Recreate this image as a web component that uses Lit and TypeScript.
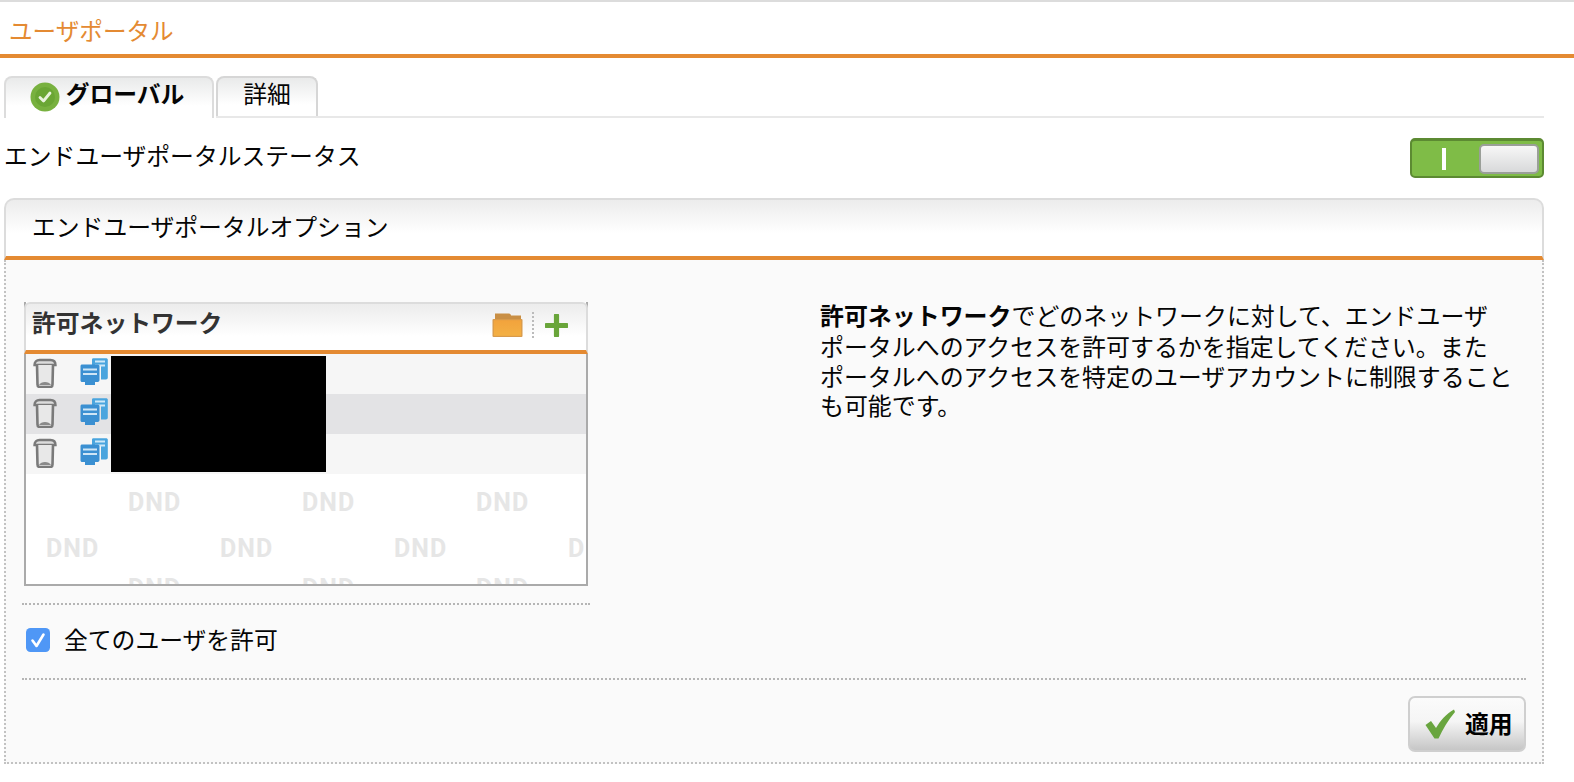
import { LitElement, html, css, svg } from "lit";
import { customElement } from "lit/decorators.js";

const trash = svg`<svg class="trash" width="24" height="30" viewBox="0 0 24 30" fill="none">
  <path d="M1.5 7 C1.5 4 3.5 2 6.5 2 H17.5 C20.5 2 22.5 4 22.5 7 Z" fill="#dcdcdc" stroke="#7a7a7a" stroke-width="2.4"/>
  <path d="M4 7 L4.5 26.5 C4.5 28 5.5 29 7 29 H17 C18.5 29 19.5 28 19.5 26.5 L20 7" fill="#e8e8e8" stroke="#7a7a7a" stroke-width="2.6"/>
  <path d="M6 27 C8 23 16 23 18 27 Z" fill="#8a8a8a"/>
</svg>`;

const server = svg`<svg class="server" width="28" height="28" viewBox="0 0 28 28">
  <path d="M12 1.5 C12 0.8 12.8 0.3 13.5 0.3 H26 C27 0.3 27.8 0.8 27.8 1.8 V19.5 C27.8 20.5 27 21.5 26 21.5 H21 V8 H12 Z" fill="#4aa5de"/>
  <path d="M15 3.5 H25 M15 7.5 H25" stroke="#cfe9f8" stroke-width="1.8"/>
  <path d="M0.5 8.5 C0.5 7 1 6.5 2.5 6.5 H17 C18.5 6.5 19.5 7 19.5 8.5 V22 C19.5 23.5 18.5 24 17 24 H15 V27 H5 V24 H2.5 C1 24 0.5 23.5 0.5 22 Z" fill="#3b90d2"/>
  <path d="M3 11.5 H17 M3 16 H17" stroke="#cfe6f6" stroke-width="1.9"/>
</svg>`;

const folder = svg`<svg class="soft" width="31" height="24" viewBox="0 0 31 24">
  <path d="M3 0.5 H17 C18 0.5 19 1.5 19 2.5 H29 V6 H3 Z" fill="#c98f45"/>
  <rect x="0.5" y="6" width="30" height="18" rx="1" fill="#d89a4a"/>
  <rect x="1.8" y="7.2" width="27.4" height="15.6" fill="url(#fg)"/>
  <defs><linearGradient id="fg" x1="0" y1="0" x2="0" y2="1"><stop offset="0" stop-color="#f2a33c"/><stop offset="1" stop-color="#f3b044"/></linearGradient></defs>
</svg>`;

const plus = svg`<svg class="soft" width="23" height="23" viewBox="0 0 23 23">
  <path d="M11.5 1.5 V21.5 M1.5 11.5 H21.5" stroke="#69a53a" stroke-width="5.2" stroke-linecap="round"/>
</svg>`;

const okCircle = svg`<svg class="soft" width="30" height="30" viewBox="0 0 30 30">
  <circle cx="15" cy="15" r="14.5" fill="#78b13f"/>
  <circle cx="15" cy="15" r="10" fill="#6aa634"/>
  <path d="M10 15.5 L13.5 19 L20 11" fill="none" stroke="#e9f3dd" stroke-width="2.8" stroke-linecap="round" stroke-linejoin="round"/>
</svg>`;

const applyCheck = svg`<svg class="soft" width="30" height="30" viewBox="0 0 30 30">
  <path d="M0.5 16 L6 12 L11 19 C15 12 21 5 29 0.5 L30 3 C23 11 18 20 13.5 29.5 L9.5 29.5 Z" fill="#69a53f"/>
</svg>`;

const tick = svg`<svg width="24" height="24" viewBox="0 0 24 24">
  <rect x="0" y="0" width="24" height="24" rx="4.5" fill="#4f97f6"/>
  <path d="M6.5 12.5 L10.5 18 L17.5 6.5" fill="none" stroke="#fff" stroke-width="2.6" stroke-linecap="round" stroke-linejoin="round"/>
</svg>`;

@customElement("app-root")
export class AppRoot extends LitElement {
  static styles = css`
    :host {
      display: block;
      width: 1574px;
      height: 782px;
      overflow: hidden;
      background: #fff;
      color: #050505;
      font-family: "Noto Sans CJK JP", "Liberation Sans", sans-serif;
      font-size: 23.8px;
      line-height: 30px;
    }
    .soft { filter: blur(0.4px); flex: none; }
    .title {
      box-sizing: border-box;
      height: 58px;
      border-top: 2px solid #dcdcdc;
      border-bottom: 4px solid #e48a32;
      padding: 13px 0 0 9px;
      color: #e48a32;
      font-size: 23.6px;
    }
    .content {
      display: flex;
      flex-direction: column;
      margin: 0 30px 0 4px;
    }
    .tabs {
      display: flex;
      height: 42px;
      margin-top: 18px;
      gap: 2px;
      box-sizing: border-box;
    }
    .tab {
      box-sizing: border-box;
      height: 40px;
      display: flex;
      align-items: center;
      justify-content: center;
      border: 2px solid #d6d6d6;
      border-bottom: none;
      border-radius: 8px 8px 0 0;
      background: linear-gradient(#e9eaea, #fff 70%);
    }
    .tab span { margin-bottom: 8px; }
    .tab.active {
      width: 210px;
      height: 42px;
      padding-bottom: 2px;
      gap: 6px;
      font-weight: 700;
      padding-right: 4px;
      border-color: #dcdcdc;
    }
    .tab.other { width: 102px; box-shadow: 0 2px 0 #e8e8e8; }
    .tab-rest {
      flex: 1;
      height: 40px;
      border-bottom: 2px solid #e8e8e8;
      margin-left: -2px;
    }
    .status {
      display: flex;
      justify-content: space-between;
      align-items: center;
      height: 40px;
      margin-top: 20px;
    }
    .status span { margin-bottom: 6px; }
    .toggle {
      box-sizing: border-box;
      width: 134px;
      height: 40px;
      border-radius: 5px;
      background: #7fbc47;
      border: 2px solid #5c8a32;
      border-top-width: 3px;
      display: flex;
      align-items: center;
      justify-content: flex-end;
      padding-right: 3px;
    }
    .toggle .mark {
      width: 4px;
      height: 22px;
      background: #fff;
      margin-right: 33px;
    }
    .toggle .knob {
      box-sizing: border-box;
      width: 60px;
      height: 30px;
      border: 2px solid #9a9f98;
      border-radius: 5px;
      background: linear-gradient(#f7f7f7, #d8d9da);
    }
    .panel { margin-top: 20px; }
    .panel-head {
      box-sizing: border-box;
      height: 62px;
      border: 2px solid #dcdcdc;
      border-bottom: 4px solid #e48a32;
      border-radius: 10px 10px 0 0;
      background: linear-gradient(#ececec, #fff 60%);
      padding: 11px 0 0 26px;
    }
    .panel-body {
      box-sizing: border-box;
      height: 504px;
      background: #fafafa;
      border: 2px dotted #c2c2c2;
      border-top: none;
      padding: 0 16px 0 16px;
      display: flex;
      flex-direction: column;
    }
    .top {
      display: flex;
      height: 418px;
      flex: none;
    }
    .left {
      width: 568px;
      flex: none;
      padding-top: 42px;
    }
    .box {
      box-sizing: border-box;
      width: 564px;
      margin-left: 2px;
      height: 284px;
      border: 2px solid #aaa;
      border-top: none;
      background: #fff;
      display: flex;
      flex-direction: column;
    }
    .box-head {
      box-sizing: border-box;
      height: 52px;
      flex: none;
      margin: 0 -2px;
      border: 2px solid #dcdcdc;
      border-bottom: 4px solid #e48a32;
      border-radius: 6px 6px 0 0;
      background: linear-gradient(#ececec, #fff 70%);
      display: flex;
      align-items: flex-start;
      padding: 4px 18px 0 6px;
      color: #333;
      font-weight: 700;
    }
    .box-head .name { flex: 1; margin-top: -1px; }
    .tools { display: flex; align-items: center; margin-top: 4px; }
    .tools .sep-v {
      height: 26px;
      border-left: 2px dotted #bbb;
      margin: 0 11px 0 9px;
    }
    .rows {
      position: relative;
      flex: none;
    }
    .row {
      box-sizing: border-box;
      height: 40px;
      background: #f6f6f6;
      display: flex;
      align-items: flex-start;
      padding: 4px 0 0 7px;
      gap: 23px;
    }
    .row svg { filter: blur(0.6px); flex: none; }
    .row.alt { background: #e3e3e5; }
    .redact {
      position: absolute;
      left: 85px;
      top: 2px;
      width: 215px;
      height: 116px;
      background: #000;
    }
    .dnd {
      flex: 1;
      overflow: hidden;
      min-height: 0;
      font-family: "Roboto", "Liberation Sans", sans-serif;
      font-weight: 700;
      font-size: 25px;
      line-height: 46px;
      color: #e6e6e6;
      letter-spacing: 1px;
      padding-top: 6px;
    }
    .dnd-row {
      display: flex;
      white-space: nowrap;
      height: 46px;
    }
    .dnd-row span { flex: none; width: 174px; }
    .dnd-row.a { padding-left: 102px; }
    .dnd-row.b { padding-left: 20px; height: 40px; }
    .left-sep {
      border-top: 2px dotted #b5b5b5;
      margin-top: 17px;
      width: 568px;
    }
    .check {
      display: flex;
      align-items: center;
      gap: 14px;
      margin: 19px 0 0 4px;
    }
    .check svg { flex: none; }
    .check span { margin-bottom: 2px; }
    .help {
      margin-left: 230px;
      padding-top: 38px;
      width: 720px;
      white-space: nowrap;
      font-size: 23.95px;
    }
    .help b { font-weight: 700; }
    .help .l { display: block; line-height: 29.5px; }
    .help .l.first { line-height: 33px; }
    .rule {
      border-top: 2px dotted #b5b5b5;
      flex: none;
    }
    .foot {
      display: flex;
      justify-content: flex-end;
      padding-top: 16px;
    }
    .apply {
      box-sizing: border-box;
      width: 118px;
      height: 56px;
      border: 2px solid #cfcfcf;
      border-radius: 7px;
      background: linear-gradient(#fbfbfb 0%, #f5f5f5 45%, #c6c6c6 100%);
      display: flex;
      align-items: center;
      gap: 10px;
      padding-left: 15px;
      font-weight: 700;
      color: #000;
      font-family: inherit;
      font-size: inherit;
    }
    .apply span { margin-bottom: 3px; }
  `;

  render() {
    return html`
      <div class="title">ユーザポータル</div>
      <div class="content">
        <div class="tabs">
          <div class="tab active">${okCircle}<span>グローバル</span></div>
          <div class="tab other"><span>詳細</span></div>
          <div class="tab-rest"></div>
        </div>
        <div class="status">
          <span>エンドユーザポータルステータス</span>
          <div class="toggle"><div class="mark"></div><div class="knob"></div></div>
        </div>
        <div class="panel">
          <div class="panel-head">エンドユーザポータルオプション</div>
          <div class="panel-body">
            <div class="top">
              <div class="left">
                <div class="box">
                  <div class="box-head">
                    <span class="name">許可ネットワーク</span>
                    <div class="tools">${folder}<div class="sep-v"></div>${plus}</div>
                  </div>
                  <div class="rows">
                    <div class="row">${trash}${server}</div>
                    <div class="row alt">${trash}${server}</div>
                    <div class="row">${trash}${server}</div>
                    <div class="redact"></div>
                  </div>
                  <div class="dnd">
                    <div class="dnd-row a"><span>DND</span><span>DND</span><span>DND</span></div>
                    <div class="dnd-row b"><span>DND</span><span>DND</span><span>DND</span><span>DND</span></div>
                    <div class="dnd-row a"><span>DND</span><span>DND</span><span>DND</span></div>
                  </div>
                </div>
                <div class="left-sep"></div>
                <div class="check">${tick}<span>全てのユーザを許可</span></div>
              </div>
              <div class="help">
                <span class="l first"><b>許可ネットワーク</b>でどのネットワークに対して、エンドユーザ</span>
                <span class="l">ポータルへのアクセスを許可するかを指定してください。また</span>
                <span class="l">ポータルへのアクセスを特定のユーザアカウントに制限すること</span>
                <span class="l">も可能です。</span>
              </div>
            </div>
            <div class="rule"></div>
            <div class="foot">
              <button class="apply">${applyCheck}<span>適用</span></button>
            </div>
          </div>
        </div>
      </div>
    `;
  }
}
